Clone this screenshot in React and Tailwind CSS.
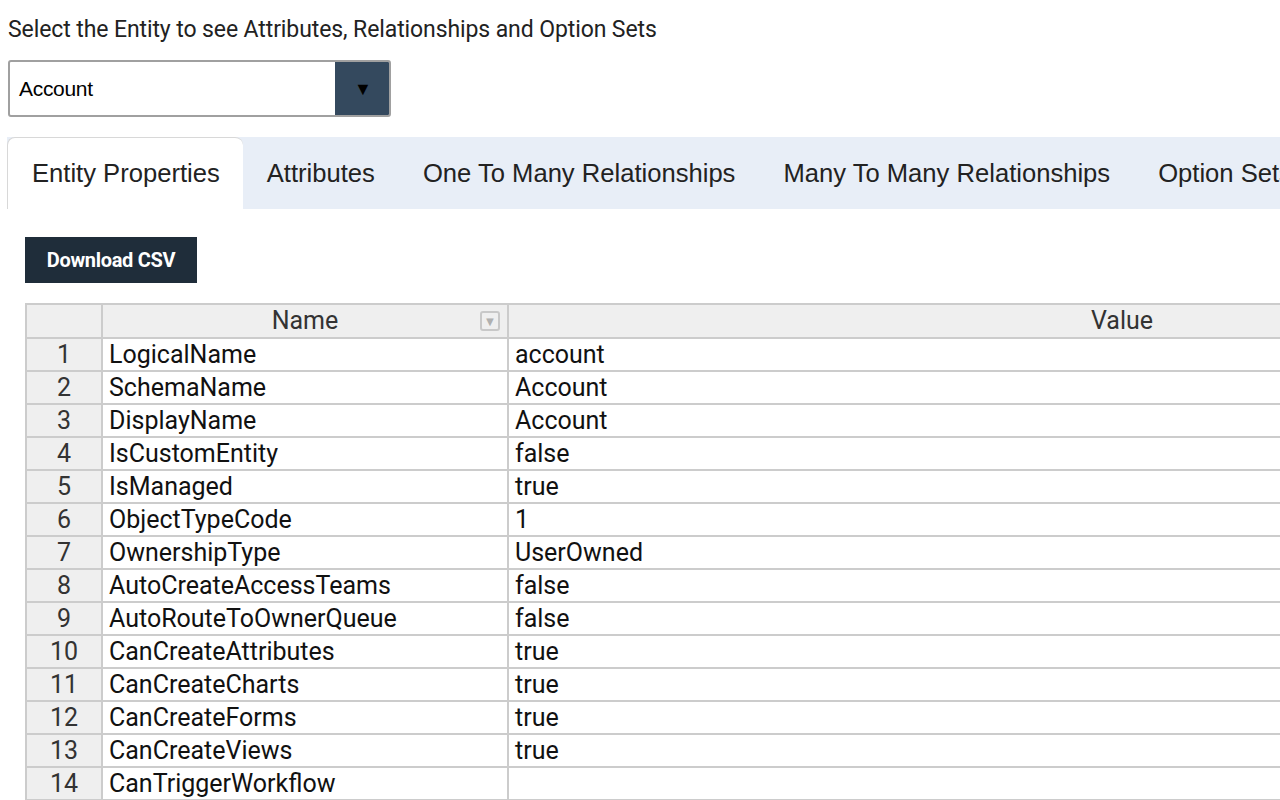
const rows = [
  ["LogicalName", "account"],
  ["SchemaName", "Account"],
  ["DisplayName", "Account"],
  ["IsCustomEntity", "false"],
  ["IsManaged", "true"],
  ["ObjectTypeCode", "1"],
  ["OwnershipType", "UserOwned"],
  ["AutoCreateAccessTeams", "false"],
  ["AutoRouteToOwnerQueue", "false"],
  ["CanCreateAttributes", "true"],
  ["CanCreateCharts", "true"],
  ["CanCreateForms", "true"],
  ["CanCreateViews", "true"],
  ["CanTriggerWorkflow", ""],
  ["ChangeTrackingEnabled", "false"],
];

const tabs = [
  "Entity Properties",
  "Attributes",
  "One To Many Relationships",
  "Many To Many Relationships",
  "Option Sets",
];

export default function App() {
  return (
    <div className="h-screen w-screen overflow-hidden bg-white">
      <div className="pl-2 pt-[16px]">
        <h1 className="font-['Roboto',sans-serif] text-[23px] leading-[28px] text-[#222] tracking-[-0.1px]">
          Select the Entity to see Attributes, Relationships and Option Sets
        </h1>

        <div className="mt-[16px] flex h-[57px] w-[383px] rounded-[3px] border-2 border-[#a0a0a0] overflow-hidden">
          <div className="flex flex-1 items-center pl-[9px] font-['Liberation_Sans',sans-serif] text-[21px] tracking-[-0.3px] text-black">
            Account
          </div>
          <div className="flex w-[56px] items-center justify-center bg-[#34495e] text-[18px] text-black -my-[2px] -mr-[2px] rounded-r-[3px]">
            ▼
          </div>
        </div>
      </div>

      <div className="mt-[20px] ml-[7px] flex h-[72px] bg-[#e8eef7] font-['Liberation_Sans',sans-serif] text-[25.6px] text-[#222] whitespace-nowrap">
        {tabs.map((t, i) => (
          <div
            key={t}
            className={
              i === 0
                ? "flex items-center pl-[24px] pr-[23px] bg-white rounded-t-[8px] border-t border-l border-[#d8d8d8]"
                : "flex items-center px-[24px]"
            }
          >
            {t}
          </div>
        ))}
      </div>

      <div className="pl-[25px] pt-[28px]">
        <button className="h-[46px] w-[172px] bg-[#1f2d3a] text-white font-['Roboto',sans-serif] font-bold text-[20px] tracking-[-0.3px]">
          Download CSV
        </button>

        <table className="mt-[20px] w-[1712px] border-collapse font-['Roboto',sans-serif] text-[25px]">
          <thead>
            <tr className="h-[34px] bg-[#efefef] text-[#333]">
              <th className="w-[76px] border-2 border-[#cccccc] font-normal"></th>
              <th className="w-[406px] border-2 border-[#cccccc] font-normal">
                <div className="relative flex items-center justify-center leading-[28px]">
                  Name
                  <span className="absolute right-[7px] flex h-[20px] w-[20px] items-center justify-center rounded-[3px] border-2 border-[#c8c8c8] text-[13px] leading-none text-[#b0b0b0]">
                    ▼
                  </span>
                </div>
              </th>
              <th className="border-2 border-[#cccccc] font-normal leading-[28px]">Value</th>
            </tr>
          </thead>
          <tbody>
            {rows.map(([name, value], i) => (
              <tr key={name} className="h-[33px]">
                <td className="border-2 border-[#cccccc] bg-[#efefef] text-center text-[#333] leading-[28px]">
                  {i + 1}
                </td>
                <td className="border-2 border-[#cccccc] px-[6px] text-[#111] leading-[28px]">{name}</td>
                <td className="border-2 border-[#cccccc] px-[6px] text-[#111] leading-[28px]">{value}</td>
              </tr>
            ))}
          </tbody>
        </table>
      </div>
    </div>
  );
}
